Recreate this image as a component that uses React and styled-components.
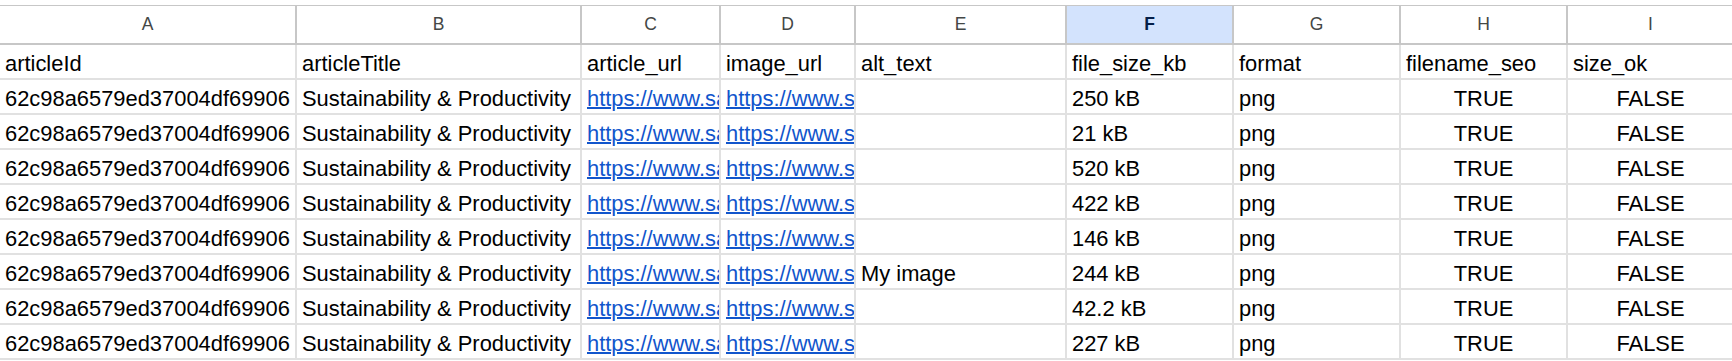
import styled, { createGlobalStyle } from 'styled-components';

const GlobalStyle = createGlobalStyle`
  body {
    margin: 0;
    background: #ffffff;
    font-family: 'Liberation Sans', Arial, sans-serif;
  }
`;

const columns = [
  { letter: 'A', width: 297 },
  { letter: 'B', width: 285 },
  { letter: 'C', width: 139 },
  { letter: 'D', width: 135 },
  { letter: 'E', width: 211 },
  { letter: 'F', width: 167, selected: true },
  { letter: 'G', width: 167 },
  { letter: 'H', width: 167 },
  { letter: 'I', width: 167 },
];

const headers = [
  'articleId',
  'articleTitle',
  'article_url',
  'image_url',
  'alt_text',
  'file_size_kb',
  'format',
  'filename_seo',
  'size_ok',
];

const sizes = ['250 kB', '21 kB', '520 kB', '422 kB', '146 kB', '244 kB', '42.2 kB', '227 kB'];

const rows = sizes.map((size, i) => ({
  id: '62c98a6579ed37004df69906',
  title: 'Sustainability & Productivity',
  articleUrl: 'https://www.sample-blog.com/sustainability-productivity',
  imageUrl: 'https://www.sample-cdn.com/images/productivity.png',
  alt: i === 5 ? 'My image' : '',
  size,
  format: 'png',
  seo: 'TRUE',
  ok: 'FALSE',
}));

const Sheet = styled.div`
  padding-top: 5px;
  width: 1732px;
  overflow: hidden;
`;

const Grid = styled.div`
  display: grid;
  grid-template-columns: ${columns.map((c) => `${c.width}px`).join(' ')};
  grid-template-rows: 39px;
  grid-auto-rows: 35px;
  width: max-content;
  border-top: 1px solid #c7c7c7;
`;

const ColHeader = styled.div`
  display: flex;
  align-items: center;
  justify-content: center;
  box-sizing: border-box;
  border-right: 2px solid #c7c7c7;
  border-bottom: 2px solid #c7c7c7;
  background: ${(p) => (p.$selected ? '#d3e3fd' : '#ffffff')};
  color: ${(p) => (p.$selected ? '#041e49' : '#444746')};
  font-weight: ${(p) => (p.$selected ? 700 : 400)};
  font-size: 17.5px;
`;

const Cell = styled.div`
  display: flex;
  align-items: flex-end;
  justify-content: ${(p) => (p.$center ? 'center' : 'flex-start')};
  box-sizing: border-box;
  padding: 0 0 1px ${(p) => (p.$center ? '0' : '5px')};
  border-right: 2px solid #e1e1e1;
  border-bottom: 2px solid #e1e1e1;
  overflow: hidden;
  white-space: nowrap;
  font-size: 21.9px;
  color: #000000;
`;

const Link = styled.span`
  color: #1155cc;
  text-decoration: underline;
  text-decoration-thickness: 2px;
`;

function App() {
  return (
    <>
      <GlobalStyle />
      <Sheet>
        <Grid>
          {columns.map((c) => (
            <ColHeader key={c.letter} $selected={c.selected}>
              {c.letter}
            </ColHeader>
          ))}
          {headers.map((h) => (
            <Cell key={h}>{h}</Cell>
          ))}
          {rows.map((r, i) => [
            <Cell key={`a${i}`}>{r.id}</Cell>,
            <Cell key={`b${i}`}>{r.title}</Cell>,
            <Cell key={`c${i}`}>
              <Link>{r.articleUrl}</Link>
            </Cell>,
            <Cell key={`d${i}`}>
              <Link>{r.imageUrl}</Link>
            </Cell>,
            <Cell key={`e${i}`}>{r.alt}</Cell>,
            <Cell key={`f${i}`}>{r.size}</Cell>,
            <Cell key={`g${i}`}>{r.format}</Cell>,
            <Cell key={`h${i}`} $center>
              {r.seo}
            </Cell>,
            <Cell key={`i${i}`} $center>
              {r.ok}
            </Cell>,
          ])}
        </Grid>
      </Sheet>
    </>
  );
}

export default App;
